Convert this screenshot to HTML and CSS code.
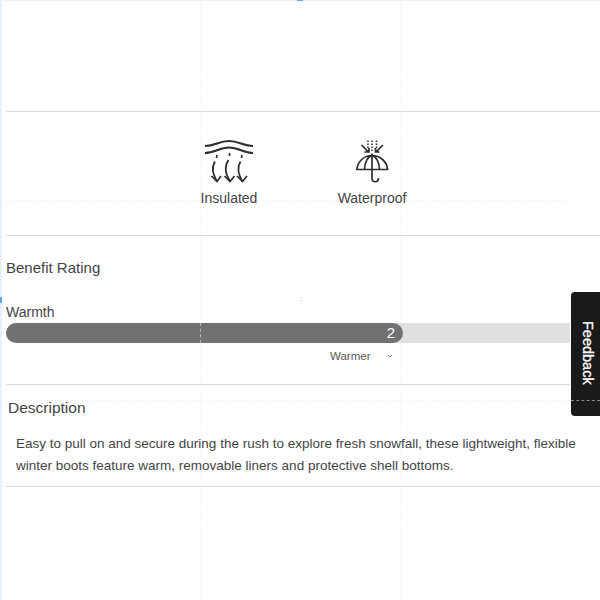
FILE: index.html
```html
<!DOCTYPE html>
<html>
  <head>
    <meta charset="utf-8">
    <meta name="viewport" content="width=device-width,initial-scale=1">
    <title>Winter boots</title>
    <link rel="stylesheet" href="styles.css">
  </head>
  <body>
    <div class="guide guide-v guide-v1"></div>
    <div class="guide guide-v guide-v2"></div>
    <div class="guide guide-h guide-h1"></div>
    <div class="guide guide-h guide-h2"></div>

    <div class="page">
      <section class="features">
        <div class="feature">
          <svg class="feature-icon" viewBox="0 0 60 50">
            <path class="stroke-wave" d="M6 10 C16 10 20 5 30 5 C40 5 44 10 54 10"/>
            <path class="stroke-wave" d="M6 17 C16 17 20 11.500 30 11.500 C40 11.500 44 17 54 17"/>
            <path class="stroke-thin" d="M18 19 L17.500 22 M30.500 17 L30.500 20 M43 19 L42.500 22"/>
            <path class="stroke-thin" d="M16 25.500 C12 32 14 38 18 45.500 M29.500 24 C24.500 31 26.500 38 31 45.500 M41.500 25.500 C37.500 32 39 38 43.500 45.500"/>
            <path class="stroke-thin" d="M12.500 40 L18 45.500 L22 40 M25.500 40 L31 45.500 L35.500 40 M38 40 L43.500 45.500 L48 40"/>
          </svg>
          <span class="feature-label">Insulated</span>
        </div>
        <div class="feature">
          <svg class="feature-icon" viewBox="0 0 60 50">
            <path class="stroke-dots" d="M26 4.500 V12 M30 4.500 V15 M34.500 4.500 V12"/>
            <path class="stroke-thin" d="M19.500 9 L26.500 16 M41 9 L34 16 M22.500 16 H27 V12 M37.500 16 H33.500 V12"/>
            <path class="stroke-thin" d="M14 33.500 H46.500 M15 33.500 C15.500 25.500 22 19.500 30 19.500 C38 19.500 45 25.500 45.500 33.500 M22.500 33.500 C22.500 26 26 20.500 30 19.500 C34 20.500 37.500 26 37.500 33.500 M30 17.500 V42 C30 47 36.500 47 36.500 42"/>
          </svg>
          <span class="feature-label">Waterproof</span>
        </div>
      </section>

      <section class="rating">
        <h2 class="rating-title">Benefit Rating</h2>
        <div class="rating-name">Warmth</div>
        <div class="rating-track">
          <div class="rating-fill">2</div>
        </div>
        <div class="rating-scale">
          <span>Warmer</span>
          <svg class="rating-caret" viewBox="0 0 6 4"><path d="M1 1 L3 3 L5 1"/></svg>
        </div>
      </section>

      <section class="description">
        <h2 class="description-title">Description</h2>
        <p class="description-text">Easy to pull on and secure during the rush to explore fresh snowfall, these lightweight, flexible winter boots feature warm, removable liners and protective shell bottoms.</p>
      </section>
    </div>

    <button class="feedback">Feedback</button>

    <div class="bar-mark"></div>
    <div class="feedback-mark"></div>
    <div class="edge edge-top"></div>
    <div class="edge edge-left"></div>
    <div class="tick tick-top"></div>
    <div class="tick tick-left"></div>
    <div class="cross"></div>
  </body>
</html>
```

FILE: styles.css
```css
* {
  box-sizing: border-box;
  margin: 0;
  padding: 0;
}

html, body {
  height: 100%;
  overflow: hidden;
}

body {
  background: #fff;
  color: #434446;
  font-family: "Liberation Sans", Arial, sans-serif;
  position: relative;
}

.page {
  padding: 111px 0 0 6px;
  position: relative;
}

.features {
  border-bottom: 1px solid #dcdcdc;
  border-top: 1px solid #dedede;
  column-gap: 43px;
  display: flex;
  height: 125px;
  justify-content: center;
  padding: 24px 5px 0 0;
}

.feature {
  align-items: center;
  display: flex;
  flex-direction: column;
  width: 100px;
}

.feature-icon {
  height: 50px;
  width: 60px;
}

.feature-icon path,
.rating-caret path {
  fill: none;
  stroke: #2e2e2e;
}

.stroke-wave {
  stroke-width: 1.9;
}

.stroke-thin {
  stroke-width: 1.7;
}

.stroke-dots {
  stroke-dasharray: 1.5 1.5;
  stroke-width: 1.5;
}

.feature-label {
  font-size: 14px;
  line-height: 16px;
  margin-top: 4px;
}

.rating {
  border-bottom: 1px solid #d8d8d8;
  height: 149px;
  margin-right: 30px;
  padding-top: 23px;
}

.rating-title {
  font-size: 15px;
  font-weight: normal;
  line-height: 18px;
}

.rating-name {
  font-size: 14px;
  line-height: 16px;
  margin-top: 27px;
}

.rating-track {
  background: #e0e0df;
  border-radius: 10px 0 0 10px;
  height: 20px;
  margin-top: 3px;
}

.rating-fill {
  background: #6f7173;
  border-radius: 10px;
  color: #fff;
  font-size: 15px;
  height: 20px;
  line-height: 20px;
  padding-right: 8px;
  text-align: right;
  width: 397px;
}

.rating-scale {
  align-items: center;
  color: #55575a;
  column-gap: 17px;
  display: flex;
  font-size: 11.5px;
  line-height: 14px;
  margin-top: 6px;
  padding-left: 324px;
}

.rating-caret {
  height: 4px;
  width: 6px;
}

.rating-caret path {
  stroke: #888;
  stroke-width: 1;
}

.description {
  border-bottom: 1px solid #d8d8d8;
  height: 102px;
  padding-top: 14px;
}

.description-title {
  font-size: 15.5px;
  font-weight: normal;
  line-height: 18px;
  padding-left: 2px;
}

.description-text {
  font-size: 13.5px;
  line-height: 22px;
  margin-top: 16px;
  padding: 0 14px 0 10px;
}

.feedback {
  background: #1a1a1a;
  border: none;
  border-radius: 4px 0 0 4px;
  color: #fff;
  font-family: inherit;
  font-size: 14.5px;
  height: 124px;
  line-height: 24px;
  padding-bottom: 2px;
  padding-left: 5px;
  position: absolute;
  right: 0;
  text-align: center;
  top: 292px;
  width: 29px;
  writing-mode: vertical-rl;
  -webkit-text-stroke: 0.3px #fff;
}

.guide {
  position: absolute;
}

.guide-v {
  border-left: 1px dashed #f5f5f5;
  bottom: 0;
  top: 0;
}

.guide-h {
  border-top: 1px dashed #f6f6f6;
  left: 0;
  right: 30px;
}

.guide-v1 {
  left: 200px;
}

.guide-v2 {
  left: 400px;
}

.guide-h1 {
  top: 200px;
}

.guide-h2 {
  top: 400px;
}

.bar-mark {
  border-left: 1px dashed #b5b5b5;
  height: 20px;
  left: 200px;
  position: absolute;
  top: 323px;
}

.feedback-mark {
  border-top: 1px dashed #888;
  left: 571px;
  position: absolute;
  right: 0;
  top: 400px;
}

.edge {
  background: #e6f1fd;
  position: absolute;
}

.edge-top {
  height: 1px;
  left: 0;
  right: 0;
  top: 0;
}

.edge-left {
  bottom: 0;
  left: 0;
  top: 0;
  width: 2px;
}

.tick {
  background: #5aa9f5;
  position: absolute;
}

.tick-top {
  height: 1px;
  left: 297px;
  top: 0;
  width: 6px;
}

.tick-left {
  height: 6px;
  left: 0;
  top: 297px;
  width: 2px;
}

.cross {
  background: linear-gradient(#eee, #eee) center / 7px 1px no-repeat, linear-gradient(#eee, #eee) center / 1px 7px no-repeat;
  height: 7px;
  left: 298px;
  position: absolute;
  top: 297px;
  width: 7px;
}
```
